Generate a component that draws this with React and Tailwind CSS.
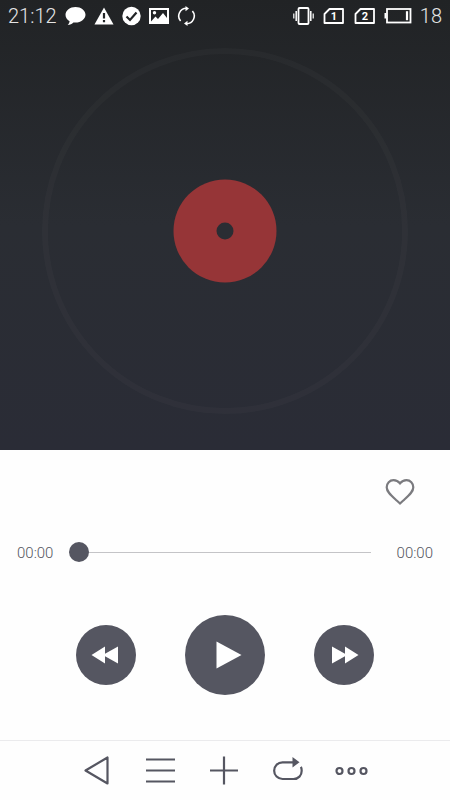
import React, { useState } from 'react';

function StatusBar() {
  return (
    <div className="flex h-8 items-center justify-between px-2 text-xl font-light text-[#e4e4e5]">
      <div className="flex items-center gap-2">
        <span>21:12</span>
        {/* Chat bubble */}
        <svg width="21" height="20" viewBox="0 0 21 20" fill="#fff">
          <path d="M10.500 1C5 1 .5 4.400.5 8.800c0 2.800 1.600 5.100 4.100 6.400-.1 1.500-.9 2.700-1.900 3.700 2.400 0 4.400-1 5.700-2.500.7.1 1.400.2 2.100.2 5.500 0 10-3.500 10-7.800S16 1 10.500 1z" />
        </svg>
        {/* Warning */}
        <svg width="20" height="20" viewBox="0 0 20 20">
          <path d="M10 1.500 19.500 18.500H.5z" fill="#fff" />
          <path d="M10 7v5.500M10 14v2.200" stroke="#222426" strokeWidth="2.200" />
        </svg>
        {/* Check */}
        <svg width="19" height="20" viewBox="0 0 19 20">
          <circle cx="9.500" cy="10" r="9.200" fill="#fff" />
          <path d="m4.500 10.500 3.500 3.500 6.500-7.500" fill="none" stroke="#222426" strokeWidth="2.200" />
        </svg>
        {/* Picture */}
        <svg width="20" height="20" viewBox="0 0 20 20" fill="none">
          <rect x="1" y="3" width="18" height="14" stroke="#fff" strokeWidth="2" />
          <path d="M2 15.500 6.500 10.500l2.500 2.500 5-6L18 12v4H2z" fill="#fff" />
          <circle cx="5.500" cy="6.800" r="1.700" fill="#fff" />
        </svg>
        {/* Sync */}
        <svg width="19" height="20" viewBox="0 0 19 20" fill="none" stroke="#fff" strokeWidth="1.600">
          <path d="M9.500 2.300A7.700 7.700 0 0 0 3.600 15M9.500 17.700A7.700 7.700 0 0 0 15.400 5" />
          <path d="M8.500 0v5.200L12 2.500zM10.500 14.800V20L7 17.500z" fill="#fff" stroke="none" />
        </svg>
      </div>
      <div className="flex items-center gap-2">
        {/* Vibrate */}
        <svg width="21" height="20" viewBox="0 0 21 20" fill="none" stroke="#fff">
          <rect x="5.500" y="2" width="10" height="16" rx="1" strokeWidth="1.800" />
          <path d="M3.200 5v10M17.800 5v10" strokeWidth="1.500" />
          <path d="M.8 7.500v5M20.200 7.500v5" strokeWidth="1.200" />
        </svg>
        <SimIcon slot="1" />
        <SimIcon slot="2" />
        {/* Battery */}
        <svg width="28" height="20" viewBox="0 0 28 20" fill="none">
          <rect x="3" y="3" width="23.500" height="13.500" stroke="#fff" strokeWidth="1.800" />
          <path d="M1.500 7v5.500" stroke="#fff" strokeWidth="2" />
          <path d="M23 5.200v9" stroke="#fff" strokeWidth="2.200" />
        </svg>
        <span>18</span>
      </div>
    </div>
  );
}

function SimIcon({ slot }) {
  return (
    <svg width="23" height="20" viewBox="0 0 23 20">
      <path d="M7.500 3H21v14H2.500V8z" fill="none" stroke="#fff" strokeWidth="1.800" strokeLinejoin="round" />
      <text x="12" y="14" fill="#fff" textAnchor="middle" className="text-[11px] font-bold">
        {slot}
      </text>
    </svg>
  );
}

function Disc() {
  return (
    <svg className="w-full" viewBox="0 0 366 366">
      <circle cx="183" cy="183" r="180" fill="none" stroke="#fff" strokeOpacity="0.025" strokeWidth="6" />
      <circle cx="183" cy="183" r="51.500" fill="#963537" />
      <circle cx="183" cy="183" r="8.500" fill="#2a2d33" />
    </svg>
  );
}

function NavButton({ label, children }) {
  return (
    <button type="button" aria-label={label} className="flex h-full w-16 items-center justify-center">
      <svg width="34" height="30" viewBox="0 0 34 30" fill="none" stroke="#555661" strokeWidth="2.200" className="overflow-visible">
        {children}
      </svg>
    </button>
  );
}

export default function App() {
  const [position, setPosition] = useState(0);

  return (
    <div className="flex min-h-screen flex-col bg-[#fefefe] font-['Roboto',sans-serif]">
      {/* Cover */}
      <header className="bg-linear-to-b from-[#212325] via-[#2a2d33] via-50% to-[#2a2c36]">
        <StatusBar />
        <div className="px-[42px] pt-4 pb-9">
          <Disc />
        </div>
      </header>

      <main>
        <div className="flex justify-end pt-[26px] pr-[34px]">
          <button type="button" aria-label="Favorite">
            <svg width="32" height="32" viewBox="0 0 32 32" fill="none" stroke="#7b7b7f" strokeWidth="2.200">
              <path d="M16 27.500 13 24.800C7 19.300 2.700 15.900 2.700 11.200 2.700 7.200 5.700 4.100 9.500 4.100c2.500 0 4.900 1.300 6.500 3.300 1.600-2 4-3.300 6.500-3.300 3.800 0 6.800 3.100 6.800 7.100 0 4.700-4.300 8.100-10.300 13.600z" />
            </svg>
          </button>
        </div>

        {/* Progress */}
        <div className="mt-6 flex h-10 items-center px-[17px] text-[15px] font-light text-[#55565e]">
          <span className="w-[52px] pt-0.5">00:00</span>
          <input
            type="range"
            min="0"
            max="100"
            value={position}
            onChange={(e) => setPosition(Number(e.target.value))}
            aria-label="Playback position"
            className="h-5 min-w-0 flex-1 appearance-none bg-transparent [&::-webkit-slider-runnable-track]:h-px [&::-webkit-slider-runnable-track]:bg-[#c4c4c7] [&::-webkit-slider-thumb]:-mt-2.5 [&::-webkit-slider-thumb]:size-5 [&::-webkit-slider-thumb]:appearance-none [&::-webkit-slider-thumb]:rounded-full [&::-webkit-slider-thumb]:bg-[#555661]"
          />
          <span className="w-[62px] pt-0.5 text-right">00:00</span>
        </div>

        {/* Playback controls */}
        <div className="flex items-center justify-center gap-[49px] pt-[43px] pb-11">
          <button type="button" aria-label="Previous" className="flex size-[60px] items-center justify-center rounded-full bg-[#555661]">
            <svg width="30" height="18" viewBox="0 0 30 18" fill="#fff">
              <path d="M.5 9 14 .5v7.200L27 .5v17L14 10.300v7.200z" />
            </svg>
          </button>
          <button type="button" aria-label="Play" className="flex size-20 items-center justify-center rounded-full bg-[#555661] pl-2">
            <svg width="26" height="28" viewBox="0 0 26 28" fill="#fff">
              <path d="M.5.500 25.500 14 .5 27.500z" />
            </svg>
          </button>
          <button type="button" aria-label="Next" className="flex size-[60px] items-center justify-center rounded-full bg-[#555661]">
            <svg width="30" height="18" viewBox="0 0 30 18" fill="#fff">
              <path d="M29.500 9 16 .5v7.200L3 .5v17l13-7.200v7.200z" />
            </svg>
          </button>
        </div>
      </main>

      <nav className="mt-auto flex h-[60px] justify-center border-t border-[#ebebed]">
        <NavButton label="Back">
          <path d="M5.500 14.500 27.500 1.500v26z" strokeLinejoin="round" />
        </NavButton>
        <NavButton label="Playlist">
          <path d="M2 3.500h29M2 14.500h29M2 25.500h29" />
        </NavButton>
        <NavButton label="Add">
          <path d="M2 14.500h28M16 .5v28" />
        </NavButton>
        <NavButton label="Repeat">
          <path d="M22 6.300H10.500A8.300 8.300 0 0 0 10.500 23H21.500c5 0 8.200-3.600 8.200-8.200 0-1.500-.2-2.800-.8-3.900" />
          <path d="M20.500 1v10.500L27.500 6.300z" fill="#555661" stroke="none" />
        </NavButton>
        <NavButton label="More">
          <circle cx="3.500" cy="15" r="3" />
          <circle cx="15.500" cy="15" r="3" />
          <circle cx="27.500" cy="15" r="3" />
        </NavButton>
      </nav>
    </div>
  );
}
